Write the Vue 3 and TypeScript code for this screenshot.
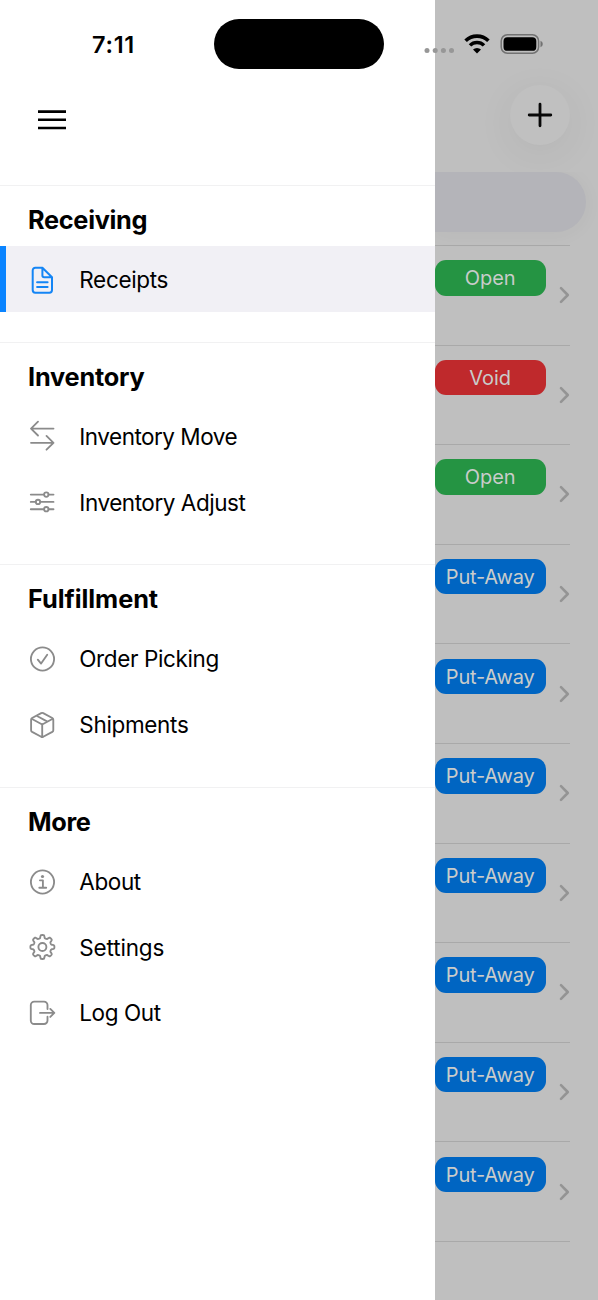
<script setup lang="ts">
type IconName = 'doc' | 'move' | 'adjust' | 'check' | 'box' | 'info' | 'gear' | 'logout'
interface Item { label: string; icon: IconName; tracking: number; active?: boolean }
interface Section { title: string; tracking: number; items: Item[] }

const sections: Section[] = [
  { title: 'Receiving', tracking: -0.3, items: [{ label: 'Receipts', icon: 'doc', tracking: -0.33, active: true }] },
  {
    title: 'Inventory', tracking: -0.2,
    items: [
      { label: 'Inventory Move', icon: 'move', tracking: -0.5 },
      { label: 'Inventory Adjust', icon: 'adjust', tracking: -0.45 },
    ],
  },
  {
    title: 'Fulfillment', tracking: -0.05,
    items: [
      { label: 'Order Picking', icon: 'check', tracking: -0.38 },
      { label: 'Shipments', icon: 'box', tracking: -0.33 },
    ],
  },
  {
    title: 'More', tracking: -0.35,
    items: [
      { label: 'About', icon: 'info', tracking: -0.4 },
      { label: 'Settings', icon: 'gear', tracking: -0.15 },
      { label: 'Log Out', icon: 'logout', tracking: -0.4 },
    ],
  },
]

const statuses: string[] = ['Open', 'Void', 'Open', ...Array<string>(7).fill('Put-Away')]

// Smooth eight-tooth outline for the settings gear
const gearPoints: string[] = []
for (let i = 0; i <= 160; i++) {
  const a = (i / 160) * Math.PI * 2
  const wave = Math.tanh(2.4 * Math.cos(8 * a)) / Math.tanh(2.4)
  const r = 10.5 + 1.5 * wave
  gearPoints.push(`${(16.4 + r * Math.cos(a)).toFixed(2)} ${(16 + r * Math.sin(a)).toFixed(2)}`)
}
const gearPath = `M${gearPoints.join('L')}Z`
</script>

<template>
  <div class="screen">
    <aside class="drawer">
      <header class="drawer-head">
        <svg class="burger" width="28" height="20" viewBox="0 0 28 20">
          <path d="M0 1.6H28M0 9.8H28M0 18H28" stroke="#000" stroke-width="2.6" />
        </svg>
      </header>
      <section v-for="s in sections" :key="s.title" class="section">
        <h2 class="title" :style="{ letterSpacing: s.tracking + 'px' }">{{ s.title }}</h2>
        <div v-for="it in s.items" :key="it.label" class="item" :class="{ active: it.active }">
          <svg class="icon" width="32" height="32" viewBox="0 0 32 32">
            <g v-if="it.icon === 'doc'">
              <path d="M16.4 3.8H9.3a2.6 2.6 0 0 0-2.6 2.6V26.1a2.6 2.6 0 0 0 2.6 2.6H23.4a2.6 2.6 0 0 0 2.6-2.6V13.3ZV11.5a1.8 1.8 0 0 0 1.8 1.8H26" />
              <path d="M11.1 18.3H21.6M11.1 22.9H21.6" />
            </g>
            <g v-else-if="it.icon === 'move'">
              <path d="M27.5 8.6H5M12 1.7L5 8.6L12 15.5M5 22.8H27.5M20.5 15.9L27.5 22.8L20.5 29.7" />
            </g>
            <g v-else-if="it.icon === 'adjust'">
              <path d="M4.8 8.6H18M22.6 8.6H27.5M4.8 15.9H9.7M14.3 15.9H27.5M4.8 23.2H18M22.6 23.2H27.5" />
              <circle cx="20.3" cy="8.6" r="2.2" /><circle cx="12" cy="15.9" r="2.2" /><circle cx="20.3" cy="23.2" r="2.2" />
            </g>
            <g v-else-if="it.icon === 'check'">
              <circle cx="16.5" cy="16" r="11.6" />
              <path d="M11.8 16.7L15.1 20.6L21.2 11.7" />
            </g>
            <g v-else-if="it.icon === 'box'">
              <path d="M15.2 4.1Q16.2 3.6 17.2 4.1L26.3 9Q27.3 9.6 27.3 10.7V21.2Q27.3 22.3 26.3 22.9L17.2 27.8Q16.2 28.3 15.2 27.8L6.100 22.900Q5.100 22.300 5.100 21.200V10.700Q5.100 9.600 6.100 9ZM5.600 9.700L16.200 15.500L26.800 9.700M16.200 15.500V28M10.600 6.800L21.400 12.600" />
            </g>
            <g v-else-if="it.icon === 'info'">
              <circle cx="16.5" cy="16" r="11.6" />
              <path d="M13.9 14.3H16.9V21.6M13.3 21.7H20.2" />
              <circle class="dot" cx="16.500" cy="10.500" r="1.600" />
            </g>
            <g v-else-if="it.icon === 'gear'">
              <path :d="gearPath" /><circle cx="16.4" cy="16" r="4" />
            </g>
            <g v-else>
              <path d="M21.5 12.1V8.1a3.5 3.5 0 0 0-3.5-3.5H8.3a3.5 3.5 0 0 0-3.5 3.5V23.5a3.5 3.5 0 0 0 3.5 3.5H18a3.5 3.5 0 0 0 3.5-3.5V19.7M14 15.9H28M24.3 11.9L28.3 15.9L24.3 19.9" />
            </g>
          </svg>
          <span class="label" :style="{ letterSpacing: it.tracking + 'px' }">{{ it.label }}</span>
        </div>
      </section>
    </aside>

    <main class="page">
      <div class="toolbar">
        <div class="add">
          <svg width="26" height="26" viewBox="0 0 26 26">
            <path d="M13 2.200V23.800M2.200 13H23.800" stroke="#080808" stroke-width="2.800" stroke-linecap="round" />
          </svg>
        </div>
      </div>
      <div class="search"></div>
      <div class="list">
        <div v-for="(st, i) in statuses" :key="i" class="row">
          <span class="badge" :class="st.toLowerCase()">{{ st }}</span>
          <svg class="chevron" width="11" height="18" viewBox="0 0 11 18">
            <path d="M2 2.200L8.800 9L2 15.800" fill="none" stroke="#949494" stroke-width="2.600" stroke-linecap="round" stroke-linejoin="round" />
          </svg>
        </div>
      </div>
    </main>

    <div class="status">
      <span class="time">7:11</span>
      <div class="island"></div>
      <svg class="indicators" width="122" height="24" viewBox="0 0 122 24">
        <g fill="#979797"><circle cx="5" cy="18.600" r="2.500" /><circle cx="13.200" cy="18.600" r="2.500" /><circle cx="21.400" cy="18.600" r="2.500" /><circle cx="29.500" cy="18.600" r="2.500" /></g>
        <g fill="none" stroke="#000">
          <path d="M43.600 8.800A16.200 16.200 0 0 1 66.400 8.800" stroke-width="3.600" />
          <path d="M48 13.400A9.800 9.800 0 0 1 62 13.400" stroke-width="3.500" />
        </g>
        <path d="M55 21.500L51 17.500A5.800 5.800 0 0 1 59 17.500Z" />
        <rect x="79.200" y="2.800" width="37.400" height="18.400" rx="6.200" fill="none" stroke="#727272" stroke-width="1.500" />
        <rect x="81.500" y="5.200" width="32.800" height="13.600" rx="3.900" />
        <path d="M118.500 8.700Q120.800 9.500 120.800 12T118.500 15.300Z" fill="#727272" />
      </svg>
    </div>
  </div>
</template>

<style>
body { background: #bfbfbf; }
</style>

<style scoped>
.screen {
  position: relative;
  display: flex;
  width: 598px;
  height: 1300px;
  overflow: hidden;
  background: #bfbfbf;
  font-family: Inter, "Liberation Sans", sans-serif;
  color: #000;
}
.drawer { width: 434.7px; flex: none; background: #fff; }
.drawer-head { height: 185px; box-sizing: border-box; padding: 110px 0 0 38px; }
.burger { display: block; }
.section { border-top: 1px solid #f1f1f2; padding-bottom: 30px; }
.title {
  margin: 0;
  height: 60.2px;
  padding: 5px 0 0 28px;
  box-sizing: border-box;
  line-height: 58px;
  font-size: 25.3px;
  font-weight: 700;
}
.item {
  height: 65.7px;
  box-sizing: border-box;
  display: flex;
  align-items: center;
  padding: 1px 0 0 26px;
}
.active { background: #f1f0f5; box-shadow: inset 6px 0 #0a84ff; }
.icon { flex: none; fill: none; stroke: #8b8b8b; stroke-width: 1.85; stroke-linecap: round; stroke-linejoin: round; }
.active .icon { stroke: #1485f5; stroke-width: 2; }
.dot { fill: #8b8b8b; stroke: none; }
.label { margin-left: 21.3px; padding-top: 1px; font-size: 22.500px; line-height: 32px; white-space: nowrap; }
.page { flex: 1; min-width: 0; }
.toolbar { height: 172px; box-sizing: border-box; padding: 85px 28px 0 0; display: flex; justify-content: flex-end; }
.add {
  width: 60px;
  height: 60px;
  border-radius: 50%;
  background: #c0c0c0;
  display: flex;
  align-items: center;
  justify-content: center;
  box-shadow: 0 8px 40px rgba(0, 0, 0, 0.06);
}
.search { height: 60px; margin-right: 12px; border-radius: 0 30px 30px 0; background: #b4b4b9; clip-path: inset(0 -40px -40px 0); box-shadow: 0 2px 20px rgba(0, 0, 0, 0.04); }
.list { margin: 13px 28px 0 0; border-top: 1px solid #a9a9a9; }
.row { height: 99.6px; box-sizing: border-box; border-bottom: 1px solid #a9a9a9; display: flex; justify-content: space-between; }
.badge {
  width: 111px;
  height: 35.5px;
  margin-top: 14.2px;
  border-radius: 11px;
  text-align: center;
  line-height: 36px;
  font-size: 20px;
  color: #c9ccca;
}
.open { background: #259443; }
.void { background: #bf292c; }
.put-away { background: #0065c2; letter-spacing: -0.2px; }
.chevron { margin-top: 40.200px; }
.status { position: absolute; inset: 0 0 auto 0; height: 88px; }
.time { position: absolute; left: 92px; top: 30px; font-size: 23.5px; font-weight: 600; line-height: 30px; letter-spacing: 0.7px; }
.island { position: absolute; left: 214px; top: 19px; width: 170px; height: 50px; border-radius: 25px; background: #000; }
.indicators { position: absolute; left: 422px; top: 32px; }
</style>
